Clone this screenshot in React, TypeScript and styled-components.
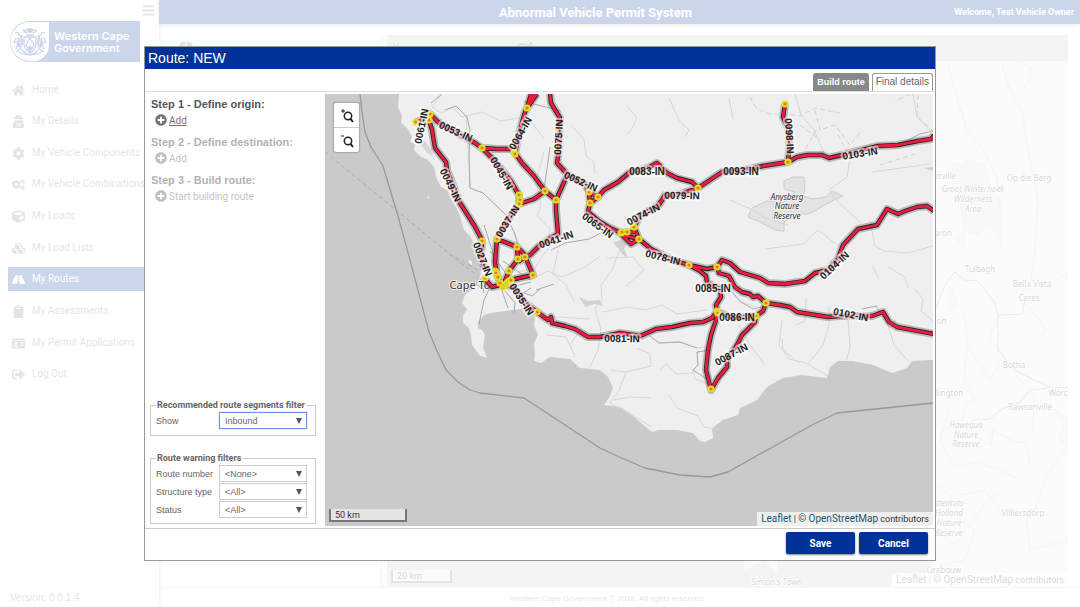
import React from "react";
import styled, { createGlobalStyle, css } from "styled-components";
import {
  FaHome, FaUserSecret, FaCog, FaCogs, FaCube, FaCubes, FaRoad, FaClipboard,
  FaIdCard, FaSignOutAlt, FaPlusCircle, FaBars, FaEdit,
} from "react-icons/fa";

const blue = "#003399";
const uiFont = `Roboto, "Liberation Sans", sans-serif`;

const GlobalStyle = createGlobalStyle`
  * { box-sizing: border-box; }
  body {
    margin: 0;
    background: #fff;
    font-family: "Liberation Sans", Arial, sans-serif;
    font-size: 10px;
    color: #666;
  }
  button, select { font-family: inherit; }
`;

/* ---------- page ---------- */

const Page = styled.div`
  display: flex;
  min-height: 100vh;
`;

const Sidebar = styled.aside`
  display: flex;
  flex-direction: column;
  flex: 0 0 159px;
  padding: 4px 0 3px 8px;
  box-shadow: 0 0 6px rgba(0, 0, 0, 0.4);
`;

const MenuToggle = styled.button`
  align-self: flex-end;
  display: flex;
  height: 13px;
  margin: 0 4px 4px 0;
  padding: 0;
  border: 0;
  background: none;
  color: #777;
  font-size: 13px;
`;

const Brand = styled.a`
  display: flex;
  align-items: center;
  width: 130px;
  height: 41px;
  margin-left: 2px;
  background: ${blue};
  border-radius: 20px 0 0 20px;
  color: #fff;
  font: 600 11px/12px Inter, sans-serif;
  text-decoration: none;
  svg { flex: none; margin-right: 5px; }
`;

const Menu = styled.nav`
  display: flex;
  flex-direction: column;
  justify-content: space-between;
  height: 309px;
  margin-top: 15px;
`;

const MenuLink = styled.a<{ $active?: boolean }>`
  display: grid;
  grid-template-columns: 20px 1fr;
  align-items: center;
  height: 24px;
  padding-left: 4px;
  color: ${(p) => (p.$active ? "#fff" : "#777")};
  background: ${(p) => (p.$active ? blue : "none")};
  font-family: ${uiFont};
  text-decoration: none;
  white-space: nowrap;
  svg { font-size: 13px; margin-top: 2px; }
`;

const Version = styled.small`
  margin: auto 0 0 2px;
  font-size: 10px;
  line-height: 12px;
  color: #777;
`;

const Main = styled.main`
  display: flex;
  flex-direction: column;
  flex: 1;
  min-width: 0;
`;

const TopBar = styled.header`
  display: grid;
  grid-template-columns: 160px 1fr 202px;
  align-items: center;
  height: 24px;
  padding-right: 6px;
  background: ${blue};
  color: #fff;
  box-shadow: 0 1px 4px rgba(0, 0, 0, 0.4);
  font-family: ${uiFont};
  h1 { grid-column: 2; margin: 0; font-size: 13px; text-align: center; }
  b { text-align: right; font-size: 9px; }
`;

const Content = styled.div`
  display: flex;
  flex: 1;
  padding: 11px 12px 0 0;
  border-bottom: 1px solid #ddd;
`;

const RouteList = styled.section`
  flex: 0 0 221px;
  padding: 3px 16px;
  font-size: 22px;
  color: #777;
`;

const Gutter = styled.div`
  flex: 0 0 7px;
  background: linear-gradient(90deg, #e4e4e4, #fff);
`;

const MapPanel = styled.section`
  display: flex;
  flex-direction: column;
  flex: 1;
  min-width: 0;
`;

const MapToolbar = styled.div`
  display: flex;
  gap: 118px;
  height: 26px;
  padding: 6px 5px;
  background: #c8c8c8;
  font-size: 12px;
`;

const MapArea = styled.div`
  position: relative;
  flex: 1;
  min-height: 0;
  overflow: hidden;
  background: #ebebeb;
  > svg { position: absolute; inset: 0; width: 100%; height: 100%; display: block; }
`;

const Scale = styled.div<{ $wide?: boolean }>`
  position: absolute;
  left: 4px;
  bottom: 4px;
  width: ${(p) => (p.$wide ? "78px" : "61px")};
  height: 13px;
  padding-left: 4px;
  border: 2px solid #777;
  border-top: 0;
  background: rgba(255, 255, 255, 0.5);
  color: #333;
  font: 9px/13px ${uiFont};
`;

const Attribution = styled.div`
  position: absolute;
  right: 0;
  bottom: 0;
  height: 14px;
  padding: 0 4px;
  background: rgba(255, 255, 255, 0.7);
  color: #333;
  font: 9px/14px ${uiFont};
  white-space: nowrap;
  a { color: #225566; font-size: 10px; text-decoration: none; }
`;

const PageFooter = styled.footer`
  height: 19px;
  padding-right: 24px;
  font-size: 8px;
  line-height: 21px;
  text-align: center;
  color: #777;
`;

const Veil = styled.div`
  position: fixed;
  inset: 0;
  background: rgba(255, 255, 255, 0.8);
`;

/* ---------- dialog ---------- */

const Dialog = styled.section`
  position: fixed;
  inset: 46px 144px;
  display: flex;
  flex-direction: column;
  border: 1px solid #999;
  background: #fff;
`;

const DialogTitle = styled.h2`
  flex: none;
  margin: 0;
  padding-left: 3px;
  background: ${blue};
  color: #fff;
  font-size: 14px;
  font-weight: 400;
  line-height: 22px;
`;

const Tabs = styled.div`
  display: flex;
  flex: none;
  align-items: flex-end;
  justify-content: flex-end;
  gap: 3px;
  height: 23px;
  padding-right: 2px;
  border-bottom: 1px solid #ddd;
`;

const Tab = styled.button<{ $active?: boolean }>`
  height: 18px;
  padding: 0 3px 2px;
  border: 1px solid #999;
  border-bottom: 0;
  border-radius: 3px 3px 0 0;
  background: #fff;
  color: #666;
  font-size: 10px;
  ${(p) => p.$active && css`
    background: #888;
    border-color: #888;
    color: #fff;
    font-size: 9px;
    font-weight: 700;
  `}
`;

const DialogBody = styled.div`
  display: flex;
  flex: 1;
  min-height: 0;
  padding: 2px 2px 2px 0;
  border-bottom: 1px solid #ccc;
`;

const Steps = styled.div`
  display: flex;
  flex-direction: column;
  flex: 0 0 180px;
  padding: 3px 9px 0 5px;
`;

const Step = styled.div<{ $disabled?: boolean }>`
  height: 38px;
  padding-left: 1px;
  color: #555;
  opacity: ${(p) => (p.$disabled ? 0.45 : 1)};
  h3 { margin: 0 0 1px; font-size: 11px; line-height: 14px; }
`;

const StepAction = styled.button<{ $underline?: boolean }>`
  display: flex;
  align-items: center;
  gap: 2px;
  height: 16px;
  padding: 0 0 0 4px;
  border: 0;
  background: none;
  color: #777;
  font-family: ${uiFont};
  font-size: 10px;
  text-decoration: ${(p) => (p.$underline ? "underline" : "none")};
  svg { font-size: 12px; }
`;

const Filters = styled.fieldset`
  display: grid;
  grid-template-columns: 63px 88px;
  row-gap: 1px;
  align-items: center;
  min-width: 0;
  margin: 16px 0 0;
  padding: 1px 0 5px 5px;
  border: 1px solid #ccc;
  &:first-of-type { margin-top: auto; padding-bottom: 6px; }
  &:last-of-type { margin-bottom: 2px; }
  legend {
    margin: 0;
    padding: 0 2px 0 1px;
    font: 700 9px/12px ${uiFont};
    white-space: nowrap;
  }
  label { font-size: 9px; }
`;

const Picker = styled.span`
  display: grid;
  align-items: center;
  > * { grid-area: 1 / 1; }
  svg { justify-self: end; margin-right: 5px; pointer-events: none; }
`;

const Select = styled.select<{ $focused?: boolean }>`
  appearance: none;
  width: 100%;
  height: 17px;
  padding: 0 5px;
  border: 1px solid ${(p) => (p.$focused ? "#6a95e8" : "#ccc")};
  box-shadow: ${(p) => (p.$focused ? "0 0 1px #6a95e8" : "none")};
  border-radius: 0;
  outline: 0;
  background: #fff;
  color: #666;
  font-size: 9px;
`;

const ZoomControl = styled.div`
  position: absolute;
  top: 8px;
  left: 8px;
  display: grid;
  border: 1px solid #aaa;
  border-radius: 3px;
  background: #fff;
  box-shadow: 0 0 1px #999;
  button { display: block; width: 25px; height: 24px; padding: 0; border: 0; background: none; }
  button + button { height: 25px; border-top: 1px solid #ccc; }
  svg { display: block; }
`;

const DialogActions = styled.div`
  display: flex;
  flex: none;
  justify-content: flex-end;
  gap: 4px;
  height: 31px;
  padding: 3px 7px 0 0;
`;

const Action = styled.button`
  width: 69px;
  height: 22px;
  padding: 0;
  border: 0;
  border-radius: 2px;
  background: ${blue};
  box-shadow: 0 1px 2px rgba(0, 0, 0, 0.5);
  color: #fff;
  font: 700 10px ${uiFont};
`;

/* ---------- map drawing ---------- */

const LAND =
  "M399 94L398 107 402 116 401 123 407 128 412 137 410 142 415 144 414 150 421 157 427 159 434 167 436 177 441 187 447 190 452 200 459 213 464 230 470 236 474 243 479 257 481 264 481 273 478 283 471 290 465 295 462 303 467 309 463 316 463 323 469 328 471 335 472 345 479 355 487 358 483 347 485 335 482 330 478 328 478 322 484 315 491 313 511 310 531 308 535 318 534 325 538 335 534 343 535 355 534 361 541 363 550 357 570 359 580 368 600 370 608 377 613 388 610 396 604 405 620 407 630 413 641 423 652 432 658 430 677 430 693 433 700 441 705 442 713 438 712 428 723 420 738 415 740 408 757 400 767 387 783 378 802 375 827 378 830 367 838 361 853 361 873 365 892 373 907 368 912 361 933 360V94Z";

const RIVERS = [
  "M442 94L432 107 441 113 452 107 462 117 482 112 500 121 519 118 533 124 544 139",
  "M466 117L469 158 470 188 483 193 505 214 514 232 520 247",
  "M571 125L584 139 586 156 594 162 595 174 M626 105L637 118 631 130 627 135 M669 98L679 120 689 130 685 137",
  "M544 152L536 181 541 205 537 216 550 229 548 239 M556 240L543 255 535 268 518 272",
  "M558 250L553 274 566 285 574 301 M530 280L548 271 562 277 585 267 600 256",
  "M620 249L612 270 601 285 602 300 595 308 601 330 598 350 590 367",
  "M603 312L627 307 646 310 662 305 677 314 707 310",
  "M650 336L659 343 680 342 697 348 705 347 M711 350L697 352 698 365 693 370 695 379 708 384",
  "M637 348L650 354 651 366 626 372 610 370 M626 372L619 391 610 403 652 427",
  "M614 400L630 397 651 398 M660 370L666 364 677 374 693 373 M669 395L677 408 698 416 704 427 720 430",
  "M739 325L750 345 765 365 M782 320L779 345 789 359 806 363 828 376",
  "M806 298L805 321 796 325 M829 306L829 325 823 345 808 364 M848 320L850 347 846 362",
  "M888 325L894 345 908 361 M782 338L783 350 795 360",
  "M888 267L905 277 908 288 M872 265L879 279 M915 289L923 299 921 311 933 321",
  "M730 200L751 209 765 218 788 225 M765 249L803 244 818 230 840 247 M870 220L875 246 884 251 908 253 933 246",
  "M850 159L847 177 829 190 837 201 862 224 M795 94L801 115 814 130 825 155",
  "M733 119L729 99 M872 172L930 164 M913 94L917 116 930 131 M607 258L633 257 644 270 625 287",
  "M730 288L740 302 756 307 M580 330L570 345 575 357 M540 320L560 317 589 319 M547 335L566 337 572 350",
];

const MINOR_ROADS = [
  "M442 94L431 103 M445 110L456 106 467 117 470 130 469 158 470 188 483 193 505 214 514 232 521 255",
  "M550 147L544 190 M491 285L484 300 479 324 M500 285L508 308 M505 291L515 303 514 313",
  "M509 287L532 296 540 289 M531 288L519 296 529 310 M495 259L484 225 M511 287L531 282",
  "M480 278L484 293 M474 283L484 289 M496 230L499 270 M490 251L505 272 M503 261L530 280",
  "M551 250L565 243 589 239 613 227 M536 290L554 284 M561 111L530 103",
  "M898 145L920 134 933 131 M862 309L876 306 889 324 M731 291L741 302 753 309 766 306",
  "M650 336L659 343 680 342 697 348 M711 350L697 352 698 365 693 370 708 380",
];

const ROUTES = [
  "M416 122L424 119 430 114 M429 120L430 114 438 122 450 129 475 143 482 148",
  "M429 120L432 130 435 148 446 162 447 170 460 203 474 225 481 238 482 241 481 256 485 270",
  "M482 148L497 149 511 149 515 153 522 163 534 176 545 191 556 200",
  "M482 148L494 160 510 180 519 195 519 204 534 199 545 191",
  "M519 204L508 220 497 239 495 262 497 276",
  "M515 153L520 130 525 112 527 108 537 94 M527 108L531 94 M527 104L535 94",
  "M550 94L551 103 560 118 559 150 557 163 567 174 565 180 556 200 556 210 558 234 540 245 530 255 525 257",
  "M567 174L585 184 589 192 598 197 590 203 589 192 M598 197L604 190 618 182 630 172 648 168 657 163 667 173 677 178 692 182 698 188",
  "M698 188L722 172 745 170 763 166 788 162 797 157 808 155 822 155 829 158 842 155 878 146 898 145 918 141 931 139 934 135",
  "M785 104L783 117 789 130 789 150 788 162",
  "M698 188L680 194 665 195 657 208 M663 199L657 206 640 216 634 227",
  "M590 203L588 212 600 222 610 228 621 233 634 232 634 227 639 239 631 244 622 235 639 239 651 249 670 259 689 265",
  "M689 265L707 269 717 267 722 260 730 263 740 272 760 278 768 283 785 284 805 281 815 273 828 270 838 259 843 245 858 229 877 225 882 217 887 209 898 214 905 211 917 207 927 206 934 211",
  "M689 265L700 271 706 276 707 283 720 289 721 297 716 305 717 312",
  "M717 267L719 273 729 276 735 287 742 292 750 294 753 297 758 296 766 303",
  "M766 303L780 305 790 307 797 312 828 317 840 316 857 316 872 316 883 312 889 322 897 327 934 334",
  "M766 303L763 311 756 316 755 322 742 335 737 345 727 360 727 367 718 378 711 390 706 370 708 350 711 335 716 320 717 312 735 318 756 316",
  "M504 283L515 289 526 304 537 312 548 320 551 317 552 323 565 326 575 329 588 337 600 337 620 333 640 336 656 329 672 327 690 323 703 322 712 318 717 312",
  "M497 239L517 247 518 259 509 271 504 283 M517 247L524 254 533 275 515 279 506 283 M525 257L518 262 M485 279L492 287 504 284 M495 270L500 282",
];

const NODES: [number, number][] = [
  [416, 122], [430, 114], [429, 120], [482, 148], [514, 152], [515, 154], [527, 108],
  [519, 195], [520, 200], [519, 204], [545, 191], [556, 200], [589, 192], [598, 197], [590, 203],
  [698, 188], [788, 162], [785, 104], [621, 233], [622, 232], [627, 232], [634, 227], [639, 239],
  [689, 265], [717, 267], [766, 303], [717, 311], [718, 313], [711, 389], [537, 312], [756, 316],
  [482, 241], [497, 239], [517, 247], [518, 259], [525, 257], [533, 275], [509, 271], [485, 278],
  [495, 271], [496, 273], [498, 277], [500, 283], [503, 287], [505, 285], [507, 283], [509, 281], [511, 280],
];

const LABELS: [string, number, number, number][] = [
  ["0061-IN", 421, 126, -78], ["0053-IN", 456, 131, 24], ["0049-IN", 451, 185, 64],
  ["0064-IN", 520, 133, -60], ["0045-IN", 502, 173, 60], ["0037-IN", 507, 221, -58],
  ["0027-IN", 483, 259, 68], ["0075-IN", 558, 137, -87], ["0052-IN", 581, 181, 24],
  ["0065-IN", 598, 225, 36], ["0074-IN", 643, 214, -27], ["0079-IN", 682, 195, 1],
  ["0083-IN", 647, 171, 0], ["0093-IN", 741, 171, 0], ["0103-IN", 860, 153, -9],
  ["0098-IN", 790, 136, 86], ["0041-IN", 556, 239, -19], ["0078-IN", 663, 257, 14],
  ["0035-IN", 522, 299, 57], ["0081-IN", 622, 338, 1], ["0085-IN", 713, 288, 0],
  ["0086-IN", 737, 317, 0], ["0087-IN", 731, 354, -28], ["0102-IN", 851, 314, 11],
  ["0104-IN", 834, 265, -43],
];

const RouteLabel = styled.text`
  font: 700 10px "Liberation Sans", Arial, sans-serif;
  fill: #222;
  stroke: rgba(255, 255, 255, 0.55);
  stroke-width: 4px;
  stroke-linejoin: round;
  paint-order: stroke;
  text-anchor: middle;
`;

const PlaceLabel = styled.text<{ $size: number; $italic?: boolean }>`
  font: ${(p) => (p.$italic ? "italic" : "normal")} ${(p) => p.$size}px "Noto Sans", sans-serif;
  fill: #333;
  stroke: #f2f2f2;
  stroke-width: 2px;
  paint-order: stroke;
  text-anchor: middle;
`;

function RouteMap() {
  const routes = ROUTES.join(" ");
  return (
    <svg viewBox="325 94 608 432" preserveAspectRatio="xMidYMid slice" fill="none" strokeLinejoin="round">
      <rect x="0" y="0" width="1400" height="900" fill="#cacaca" />
      <path d={LAND} fill="#efefef" />
      <path d="M419 142L425 141 432 151 433 157 427 153Z" fill="#d6d6d6" />
      <path d="M427 196l3 1-2 2zM468 260l4 1 0 4-3-2z" fill="#efefef" />
      <path d="M784 181L793 177 804 177 805 189 803 196 812 199 826 197 832 191 843 196 832 201 811 213 793 216 784 222 784 231 775 230 760 222 748 217 752 208 767 201 783 203 795 192 784 189Z" fill="#e3e3e3" stroke="#cccccc" />
      <path d="M613 243l9-4 5 4-3 6 4 9-6-4-3-5zM579 297l9 4 12-1 3 6-9-2-8 3-4-5zM923 168l10-1v4z" fill="#d2d2d2" />
      <path d={RIVERS.join(" ")} stroke="#d6d6d6" />
      <path d="M750 97L757 109 770 114 785 114 800 116 815 108 840 113 M815 110L820 130 835 125 850 145 862 130 M800 125L820 140 M838 135L850 157 M880 165L915 154 M918 95L917 117 933 131 M816 130L805 150 M910 94L895 101" stroke="#d0d0d0" strokeDasharray="5 3" />
      <path d={MINOR_ROADS.join(" ")} stroke="#aaa" />
      <path d="M360 94L362 112 365 132 371 147 383 166 398 216 410 260 429 332 437 351 446 370 458 382 470 390 480 393 524 398 600 448 617 456 645 468 680 475 710 477 728 472 812 425 837 413 885 408 933 403" stroke="#999" strokeWidth="1.3" />
      <path d="M325 152L457 260 478 276 M450 254L479 271" stroke="#aaa" strokeDasharray="4 3" />
      <PlaceLabel $size={11} x="470" y="289">Cape To</PlaceLabel>
      <path d={routes} stroke="#777" strokeOpacity=".45" strokeWidth="8" />
      <path d={routes} stroke="#222" strokeWidth="4.4" />
      <path d={routes} stroke="#ec1c40" strokeWidth="2.8" />
      {NODES.map(([x, y], i) => (
        <circle key={i} cx={x} cy={y} r="2.600" fill="#e8762c" stroke="#dfe021" strokeWidth="2" />
      ))}
      {LABELS.map(([t, x, y, a]) => (
        <RouteLabel key={t} transform={`translate(${x} ${y}) rotate(${a})`} y="4">{t}</RouteLabel>
      ))}
      <PlaceLabel $size={8} $italic x="787" y="200">Anysberg</PlaceLabel>
      <PlaceLabel $size={8} $italic x="787" y="209">Nature</PlaceLabel>
      <PlaceLabel $size={8} $italic x="787" y="219">Reserve</PlaceLabel>
    </svg>
  );
}

const TOWNS: [string, number, number][] = [
  ["Porterville", 937, 179], ["Op die Berg", 1029, 181], ["Saron", 941, 236], ["Tulbagh", 980, 272],
  ["Bella Vista", 1032, 287], ["Ceres", 1029, 301], ["Gouda on", 928, 324], ["Botha", 1014, 368],
  ["Wellington", 943, 396], ["Worc", 1058, 396], ["Rawsonville", 1030, 410],
  ["Villiersdorp", 1023, 516], ["Grabouw", 944, 573], ["Simon's Town", 777, 585],
];

const RESERVES: [string, number, number][] = [
  ["Groot Winterhoek", 973, 192], ["Wilderness", 973, 202], ["Area", 973, 212],
  ["Hawequa", 966, 428], ["Nature", 966, 438], ["Reserve", 966, 447],
  ["Hottentots-", 946, 506], ["Holland", 949, 516], ["Nature", 949, 526], ["Reserve", 949, 536],
];

function OverviewMap() {
  return (
    <svg viewBox="387 61 681 526" preserveAspectRatio="xMidYMid slice" fill="none">
      <path d="M387 540H740L745 570 765 560 778 575 775 587H387zM778 560H935L925 575 895 578 890 587H775z" fill="#c8c8c8" />
      <path d="M952 162L963 165 966 159 985 164 990 185 1001 203 1001 245 990 222 978 234 966 233 963 248 957 240 963 230 960 200 953 185Z M949 286l4 2 5 19-6 2-4-14zM1053 408l15 10v20l-6 8-3-9 5-11z" fill="#dcdcdc" stroke="#d4d4d4" />
      <path d="M961 315L965 316 967 345 983 370 990 380 1000 364 M967 350L964 378 975 400 965 405 962 420 970 433 991 445 993 430 1015 442 1025 442 1030 462 1015 478 1000 470 975 462 955 468 940 440 950 410" stroke="#c6c6c6" />
      <path d="M947 61L956 95 967 130 985 152 997 178 1000 210 1008 220M1001 61L1009 88 1023 115 1026 140 1038 200 1035 250 1030 290M1022 300L1040 320 1045 330 1038 340M1016 61L1031 67 1030 80 1022 90M998 315L989 340 1000 350 1020 380 1034 395 1033 430M1068 272L1050 286 1035 285M1068 445L1045 478 1035 510 1026 520 1030 550 1068 540M936 485L950 495 960 520 975 530 965 560 945 565M960 495L985 490 1000 510M936 530L955 545 988 500 1005 490" stroke="#c6c6c6" />
      <path d="M936 308L945 285 955 272 964 280 978 281 995 303 998 315 998 350 1015 370 1030 378 1052 388 1068 387M998 315L1022 314 1025 300M972 420L990 419 1000 410 1020 402 1030 390 1050 388" stroke="#999" />
      {TOWNS.map(([t, x, y]) => <PlaceLabel key={t} $size={8} x={x} y={y}>{t}</PlaceLabel>)}
      {RESERVES.map(([t, x, y]) => <PlaceLabel key={t + y} $size={8} $italic x={x} y={y}>{t}</PlaceLabel>)}
    </svg>
  );
}

function MapCredits() {
  return (
    <Attribution>
      <a href="#leaflet">Leaflet</a> | <a href="#osm">© OpenStreetMap</a> contributors
    </Attribution>
  );
}

function Crest() {
  return (
    <svg width="39" height="41" viewBox="0 0 39 41" fill="none">
      <path d="M20 1H39V24A16 16 0 0 1 20 40A19.500 19.500 0 0 1 20 1Z" fill="#fff" />
      <g stroke={blue} strokeWidth="1.3">
        <path d="M15 12q5-3 10 0M13 9l3 3M27 9l-3 3M20 7v5M16 14h8M17 11l3-2 3 2M14 10q6-4 12 0" />
        <path d="M14 16h12v8q-2 6-6 8-4-2-6-8zM20 17l-4 7 4 6 4-6z" />
        <path d="M5 12q3-2 4 2l3 1-2 4 3 4-5 1 3 4-5 3M6 17l-2 4 4 2-2 5M10 14l3 7M7 30q13 8 26 0M8 16l2 10M7 20l5 6" />
        <path d="M35 12q-3-2-4 2l-3 1 2 4-3 4 5 1-3 4 5 3M34 17l2 4-4 2 2 5M30 14l-3 7M12 29q8 9 16 0M32 16l-2 10M33 20l-5 6" />
      </g>
      <path d="M20 24l3 4-3 3-3-3z" fill={blue} />
    </svg>
  );
}

function Magnifier({ plus }: { plus?: boolean }) {
  return (
    <svg width="25" height="24" viewBox="0 0 25 24" fill="none" stroke="#222">
      <circle cx="14" cy="13" r="3.700" strokeWidth="1.500" />
      <path d="M16.500 15.800L19 19" strokeWidth="2" />
      <path d={plus ? "M7 8H11M9 6V10" : "M7 8H10"} />
    </svg>
  );
}

const MENU = [
  { icon: FaHome, text: "Home" },
  { icon: FaUserSecret, text: "My Details" },
  { icon: FaCog, text: "My Vehicle Components" },
  { icon: FaCogs, text: "My Vehicle Combinations" },
  { icon: FaCube, text: "My Loads" },
  { icon: FaCubes, text: "My Load Lists" },
  { icon: FaRoad, text: "My Routes", active: true },
  { icon: FaClipboard, text: "My Assessments" },
  { icon: FaIdCard, text: "My Permit Applications" },
  { icon: FaSignOutAlt, text: "Log Out" },
];

function FilterRow({ id, label, value, focused }: { id: string; label: string; value: string; focused?: boolean }) {
  return (
    <>
      <label htmlFor={id}>{label}</label>
      <Picker>
        <Select id={id} $focused={focused} defaultValue={value}>
          <option>{value}</option>
        </Select>
        <svg width="6" height="6" viewBox="0 0 6 6"><path d="M0 0H6L3 6Z" fill="#555" /></svg>
      </Picker>
    </>
  );
}

export default function App() {
  return (
    <>
      <GlobalStyle />
      <Page>
        <Sidebar>
          <MenuToggle aria-label="Toggle menu"><FaBars /></MenuToggle>
          <Brand href="#home"><Crest /><span>Western Cape<br />Government</span></Brand>
          <Menu>
            {MENU.map(({ icon: Icon, text, active }) => (
              <MenuLink key={text} href="#menu" $active={active}><Icon /><span>{text}</span></MenuLink>
            ))}
          </Menu>
          <Version>Version: 0.0.1.4</Version>
        </Sidebar>
        <Main>
          <TopBar>
            <h1>Abnormal Vehicle Permit System</h1>
            <b>Welcome, Test Vehicle Owner</b>
          </TopBar>
          <Content>
            <RouteList><FaRoad /></RouteList>
            <Gutter />
            <MapPanel>
              <MapToolbar><span>X</span><FaEdit size={15} /></MapToolbar>
              <MapArea>
                <OverviewMap />
                <Scale>20 km</Scale>
                <MapCredits />
              </MapArea>
            </MapPanel>
          </Content>
          <PageFooter>Western Cape Government © 2018. All rights reserved.</PageFooter>
        </Main>
      </Page>
      <Veil />
      <Dialog role="dialog" aria-labelledby="route-title">
        <DialogTitle id="route-title">Route: NEW</DialogTitle>
        <Tabs role="tablist">
          <Tab role="tab" $active aria-selected="true">Build route</Tab>
          <Tab role="tab" aria-selected="false">Final details</Tab>
        </Tabs>
        <DialogBody>
          <Steps>
            <Step>
              <h3>Step 1 - Define origin:</h3>
              <StepAction $underline><FaPlusCircle /><span>Add</span></StepAction>
            </Step>
            <Step $disabled>
              <h3>Step 2 - Define destination:</h3>
              <StepAction disabled><FaPlusCircle /><span>Add</span></StepAction>
            </Step>
            <Step $disabled>
              <h3>Step 3 - Build route:</h3>
              <StepAction disabled><FaPlusCircle /><span>Start building route</span></StepAction>
            </Step>
            <Filters>
              <legend>Recommended route segments filter</legend>
              <FilterRow id="show" label="Show" value="Inbound" focused />
            </Filters>
            <Filters>
              <legend>Route warning filters</legend>
              <FilterRow id="number" label="Route number" value="<None>" />
              <FilterRow id="structure" label="Structure type" value="<All>" />
              <FilterRow id="status" label="Status" value="<All>" />
            </Filters>
          </Steps>
          <MapArea>
            <RouteMap />
            <ZoomControl>
              <button aria-label="Zoom in"><Magnifier plus /></button>
              <button aria-label="Zoom out"><Magnifier /></button>
            </ZoomControl>
            <Scale $wide>50 km</Scale>
            <MapCredits />
          </MapArea>
        </DialogBody>
        <DialogActions>
          <Action>Save</Action>
          <Action>Cancel</Action>
        </DialogActions>
      </Dialog>
    </>
  );
}
